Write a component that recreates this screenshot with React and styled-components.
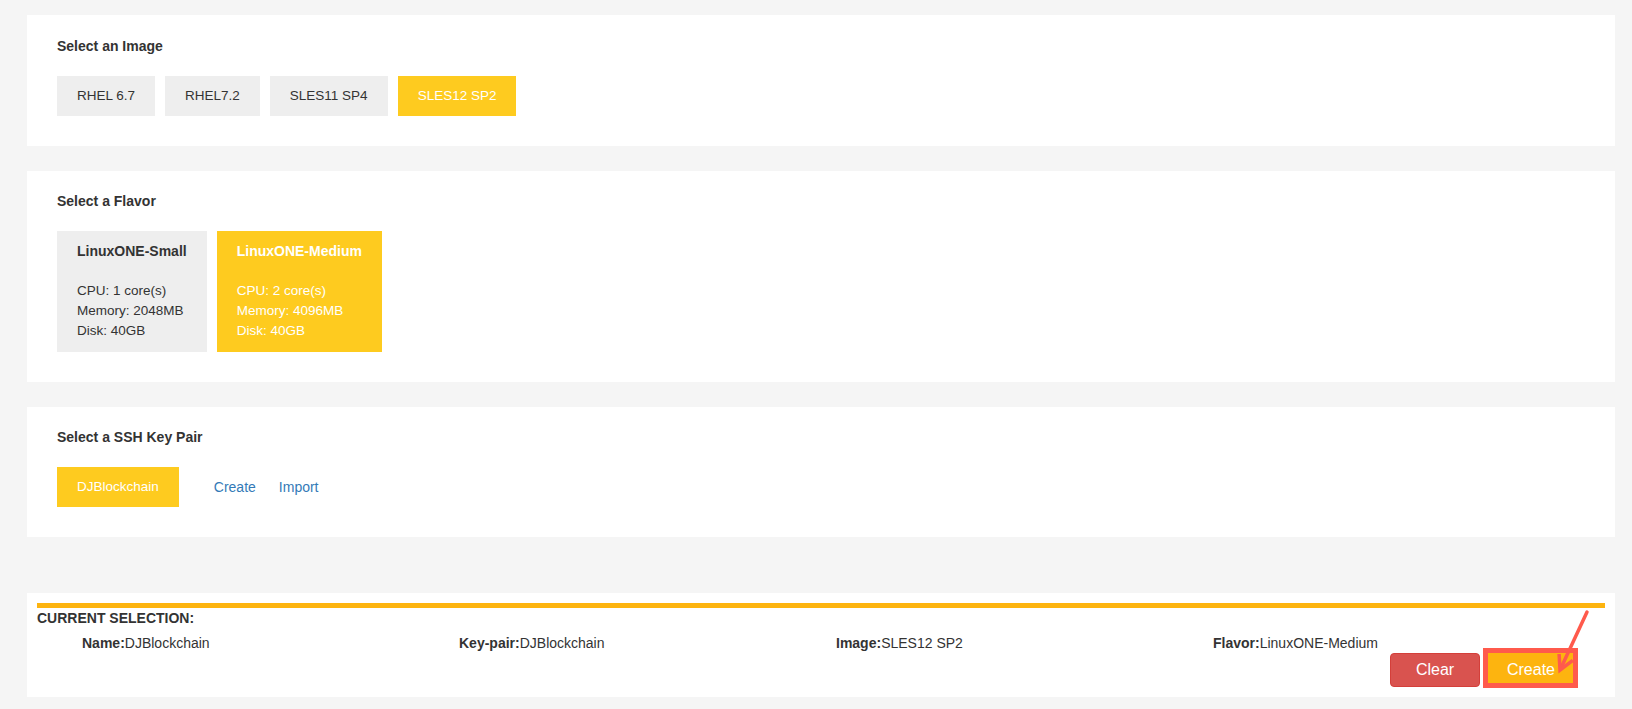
import React from "react";
import styled, { createGlobalStyle } from "styled-components";

const GlobalStyle = createGlobalStyle`
  html, body {
    margin: 0;
    padding: 0;
    background: #f5f5f5;
  }
  body {
    font-family: "Liberation Sans", Arial, Helvetica, sans-serif;
    color: #333;
  }
  * { box-sizing: border-box; }
`;

const YELLOW = "#fecb1f";
const ORANGE = "#fdb40f";
const RED_MARK = "#ff5a4c";

const Page = styled.div`
  display: flex;
  flex-direction: column;
  padding: 15px 17px 12px 27px;
`;

const Card = styled.section`
  background: #fff;
  padding: ${(p) => p.$top || 20}px 30px 30px;
  margin-bottom: 25px;
`;

const SectionTitle = styled.h3`
  margin: 0 0 20px;
  font-size: 14px;
  line-height: 20px;
  font-weight: bold;
  color: #333;
`;

const OptionRow = styled.div`
  display: flex;
  align-items: center;
  gap: 10px;
`;

const OptionButton = styled.button`
  height: 40px;
  padding: 0 20px;
  border: none;
  border-radius: 0;
  background: ${(p) => (p.$active ? YELLOW : "#eeeeee")};
  color: ${(p) => (p.$active ? "#fff" : "#333")};
  font-family: inherit;
  font-size: 13.5px;
  line-height: 40px;
  cursor: pointer;
`;

const FlavorRow = styled.div`
  display: flex;
  align-items: flex-start;
  gap: 10px;
`;

const FlavorCard = styled.div`
  padding: 10px 20px 11px;
  background: ${(p) => (p.$active ? YELLOW : "#eeeeee")};
  color: ${(p) => (p.$active ? "#fff" : "#333")};
  font-size: 13.5px;
  line-height: 20px;
`;

const FlavorName = styled.div`
  font-size: 14px;
  font-weight: bold;
  margin-bottom: 20px;
`;

const KeyActions = styled.div`
  display: flex;
  gap: 23px;
  margin-left: 25px;
`;

const KeyLink = styled.a`
  color: #337ab7;
  font-size: 14px;
  line-height: 20px;
  text-decoration: none;
  cursor: pointer;
`;

const SummaryCard = styled.section`
  background: #fff;
  margin-top: 31px;
  padding: 10px;
`;

const AccentBar = styled.div`
  height: 5px;
  background: ${ORANGE};
`;

const SummaryHeading = styled.div`
  font-size: 14px;
  line-height: 20px;
  font-weight: bold;
  text-transform: uppercase;
  color: #333;
`;

const SummaryGrid = styled.div`
  display: grid;
  grid-template-columns: repeat(4, 377px);
  padding-left: 45px;
  margin-top: 5px;
  font-size: 14px;
  line-height: 20px;
  color: #333;
`;

const SummaryLabel = styled.b`
  font-weight: bold;
`;

const ActionRow = styled.div`
  display: flex;
  justify-content: flex-end;
  gap: 6px;
  padding-right: 29px;
`;

const ActionButton = styled.button`
  width: 90px;
  height: 34px;
  padding: 0;
  border: 1px solid ${(p) => (p.$variant === "danger" ? "#d43f3a" : ORANGE)};
  border-radius: ${(p) => (p.$variant === "danger" ? "4px" : "0")};
  background: ${(p) => (p.$variant === "danger" ? "#d9534f" : ORANGE)};
  color: #fff;
  font-family: inherit;
  font-size: 16px;
  line-height: 32px;
  cursor: pointer;
`;

const Annotated = styled.div`
  position: relative;
  display: inline-flex;
`;

const HighlightBox = styled.span`
  position: absolute;
  top: -5px;
  left: -3px;
  right: -2px;
  bottom: -1px;
  border: 5px solid ${RED_MARK};
  pointer-events: none;
`;

const ArrowMark = styled.svg`
  position: absolute;
  left: 70px;
  top: -45px;
  overflow: visible;
  pointer-events: none;
`;

const images = ["RHEL 6.7", "RHEL7.2", "SLES11 SP4", "SLES12 SP2"];
const flavors = [
  { name: "LinuxONE-Small", cpu: 1, mem: 2048, disk: 40 },
  { name: "LinuxONE-Medium", cpu: 2, mem: 4096, disk: 40 },
];
const selection = [
  ["Name:", "DJBlockchain"],
  ["Key-pair:", "DJBlockchain"],
  ["Image:", "SLES12 SP2"],
  ["Flavor:", "LinuxONE-Medium"],
];

export default function App() {
  return (
    <>
      <GlobalStyle />
      <Page>
        <Card $top={21}>
          <SectionTitle>Select an Image</SectionTitle>
          <OptionRow>
            {images.map((img) => (
              <OptionButton key={img} $active={img === "SLES12 SP2"}>
                {img}
              </OptionButton>
            ))}
          </OptionRow>
        </Card>

        <Card>
          <SectionTitle>Select a Flavor</SectionTitle>
          <FlavorRow>
            {flavors.map((f) => (
              <FlavorCard key={f.name} $active={f.name === "LinuxONE-Medium"}>
                <FlavorName>{f.name}</FlavorName>
                <div>CPU: {f.cpu} core(s)</div>
                <div>Memory: {f.mem}MB</div>
                <div>Disk: {f.disk}GB</div>
              </FlavorCard>
            ))}
          </FlavorRow>
        </Card>

        <Card>
          <SectionTitle>Select a SSH Key Pair</SectionTitle>
          <OptionRow>
            <OptionButton $active>DJBlockchain</OptionButton>
            <KeyActions>
              <KeyLink>Create</KeyLink>
              <KeyLink>Import</KeyLink>
            </KeyActions>
          </OptionRow>
        </Card>

        <SummaryCard>
          <AccentBar />
          <SummaryHeading>Current Selection:</SummaryHeading>
          <SummaryGrid>
            {selection.map(([label, value]) => (
              <div key={label}>
                <SummaryLabel>{label}</SummaryLabel>
                {value}
              </div>
            ))}
          </SummaryGrid>
          <ActionRow>
            <ActionButton $variant="danger">Clear</ActionButton>
            <Annotated>
              <ActionButton $variant="primary">Create</ActionButton>
              <HighlightBox />
              <ArrowMark width="36" height="70" viewBox="0 0 36 70">
                <line
                  x1="31"
                  y1="4"
                  x2="4.5"
                  y2="61"
                  stroke={RED_MARK}
                  strokeWidth="3.5"
                  strokeLinecap="round"
                />
                <polyline
                  points="3.1,46 4,62 16.8,52.3"
                  fill="none"
                  stroke={RED_MARK}
                  strokeWidth="3.5"
                  strokeLinejoin="miter"
                />
              </ArrowMark>
            </Annotated>
          </ActionRow>
        </SummaryCard>
      </Page>
    </>
  );
}
